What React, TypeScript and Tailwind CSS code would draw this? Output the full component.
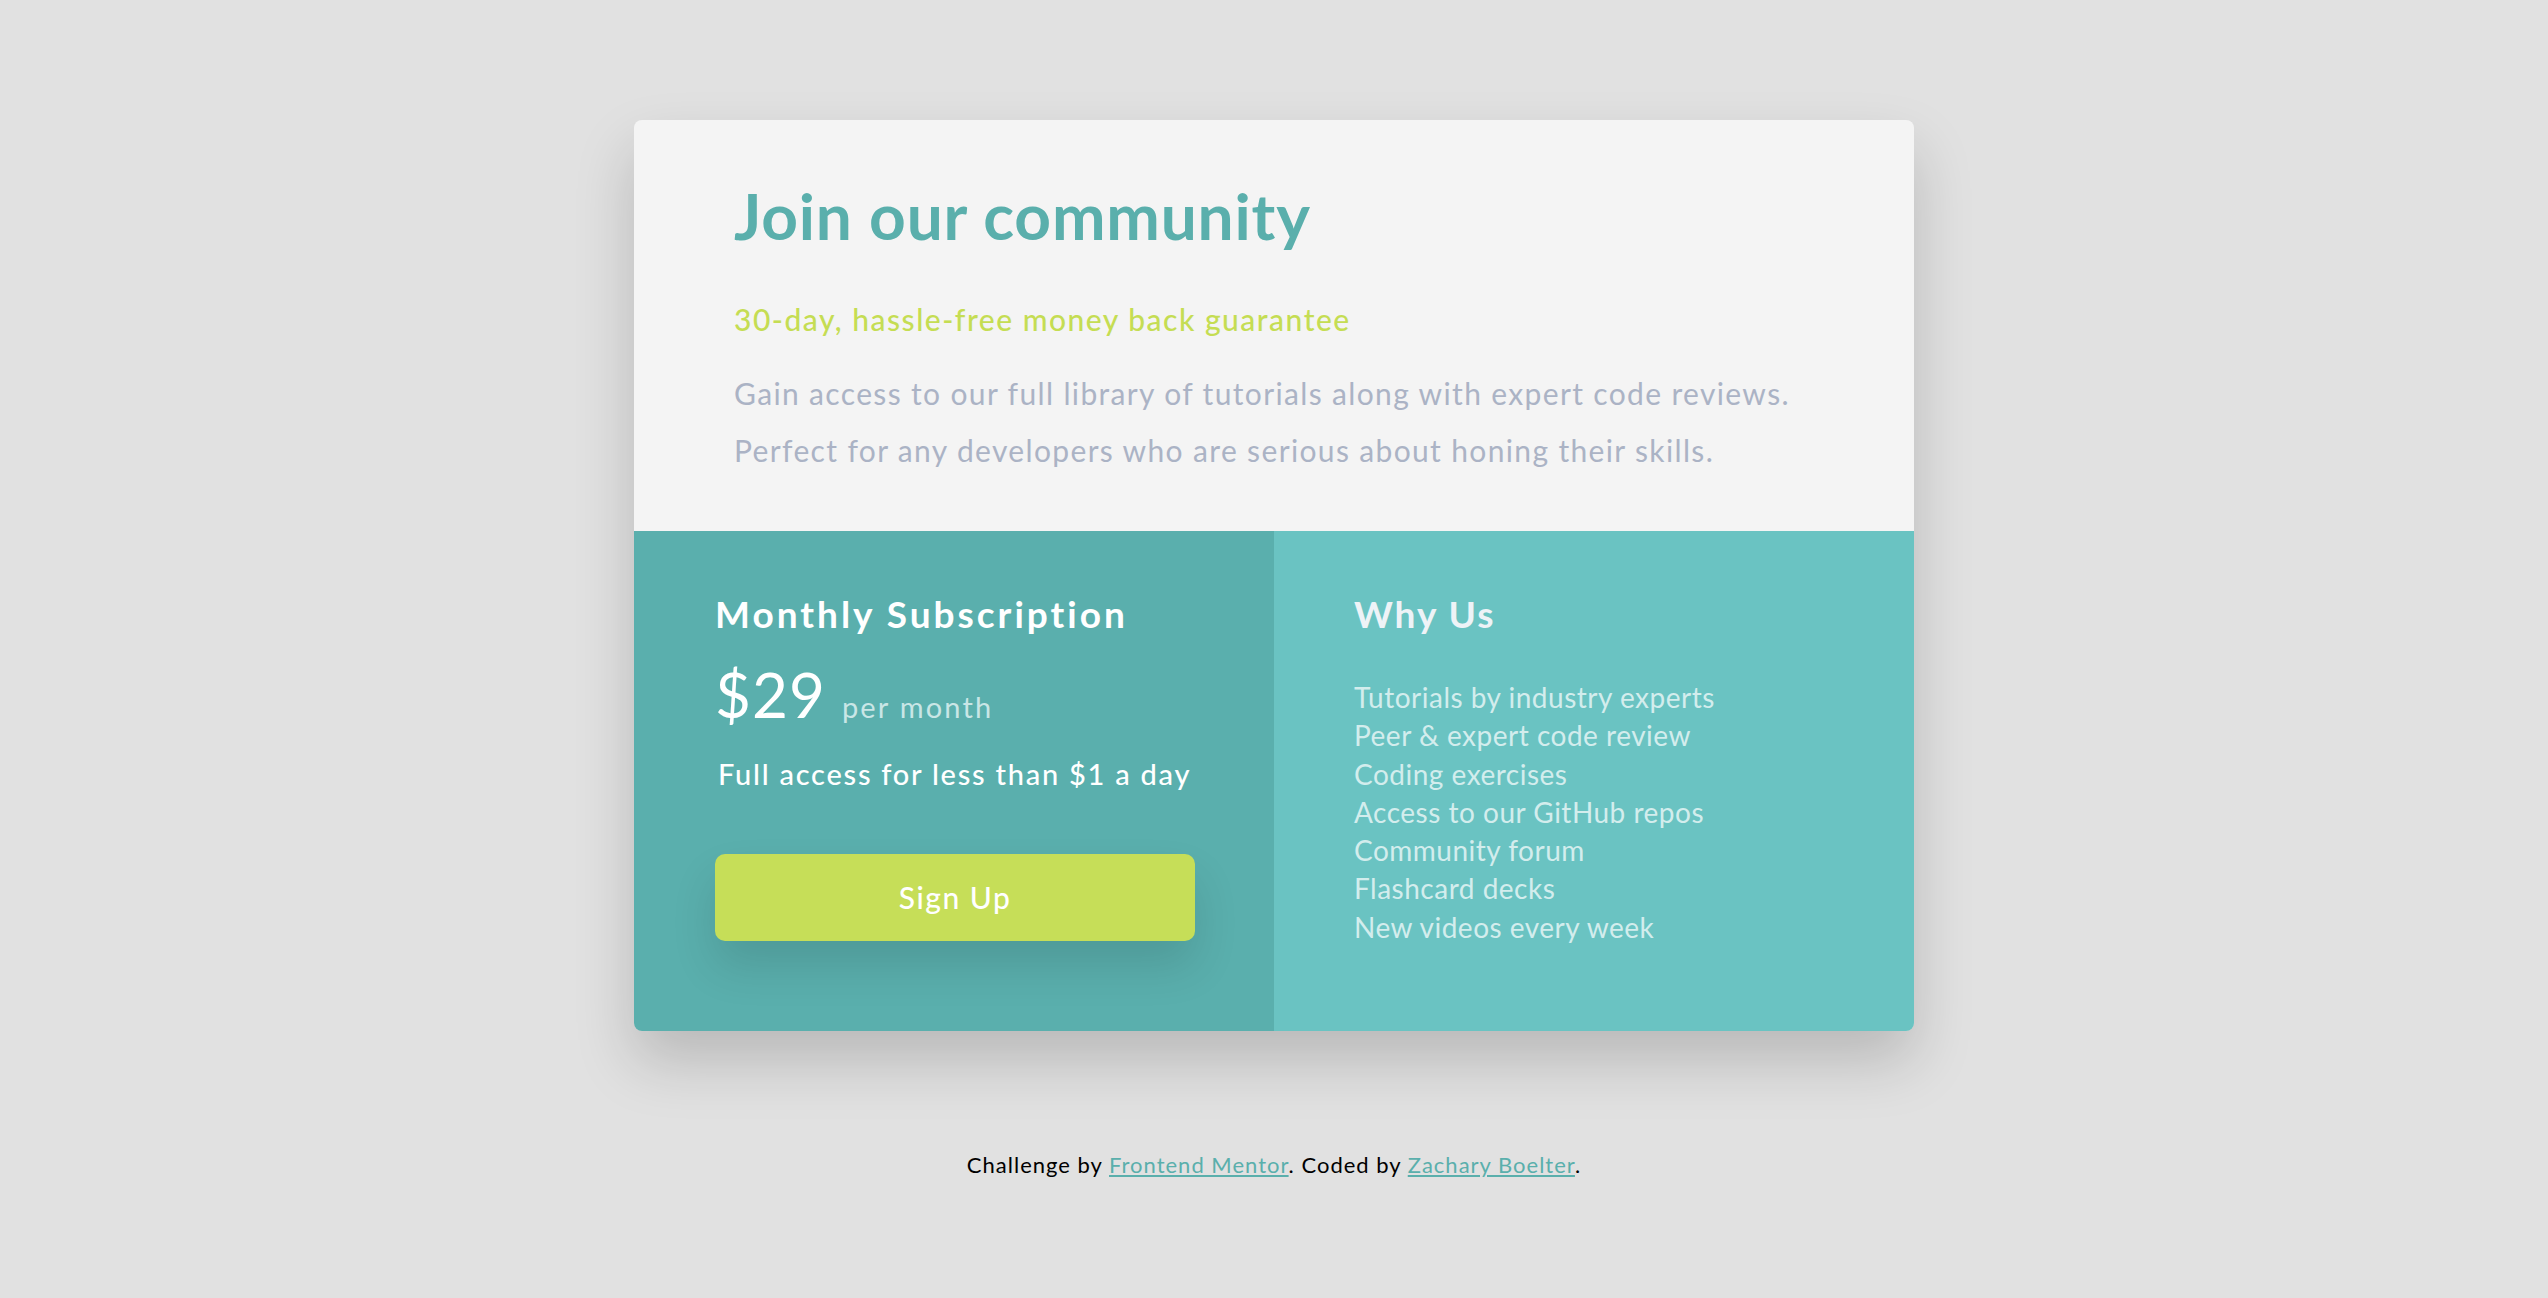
import React from "react";

const features = [
  "Tutorials by industry experts",
  "Peer & expert code review",
  "Coding exercises",
  "Access to our GitHub repos",
  "Community forum",
  "Flashcard decks",
  "New videos every week",
];

export default function App() {
  return (
    <div
      className="min-h-screen bg-[#e1e1e1] pt-[120px] flex flex-col items-center"
      style={{ fontFamily: "Lato, 'Noto Sans', sans-serif" }}
    >
      <div className="w-[1280px] rounded-[8px] overflow-hidden shadow-[0_30px_60px_rgba(0,0,0,0.18)]">
        <div className="bg-[#f4f4f4] pl-[100px] pr-[40px] pt-[64px] pb-[52px]">
          <h1 className="text-[64px] leading-[64px] font-bold text-[#5aafac] tracking-[0.8px]">
            Join our community
          </h1>
          <p className="mt-[56px] text-[30px] leading-[30px] font-medium text-[#c5dd53] tracking-[1.5px]">
            30-day, hassle-free money back guarantee
          </p>
          <p className="mt-[31px] text-[30px] leading-[57px] text-[#abb3c5] tracking-[1.35px] whitespace-nowrap">
            Gain access to our full library of tutorials along with expert code reviews.
            <br />
            Perfect for any developers who are serious about honing their skills.
          </p>
        </div>
        <div className="grid grid-cols-2">
          <div className="bg-[#5aafad] pl-[81px] pr-[60px] pt-[65px] pb-[90px]">
            <h2 className="text-[37px] leading-[36px] font-bold text-white tracking-[3px] whitespace-nowrap">
              Monthly Subscription
            </h2>
            <div className="mt-[31px] flex items-baseline gap-[16px] h-[62px] leading-[62px]">
              <span className="text-[62px] leading-[62px] text-white tracking-[1px]">$29</span>
              <span className="text-[29px] leading-[62px] text-[#c9e6e6] tracking-[2.2px]">per month</span>
            </div>
            <p className="mt-[34px] pl-[3px] text-[29px] leading-[29px] font-medium text-white tracking-[1.75px] whitespace-nowrap">
              Full access for less than $1 a day
            </p>
            <button className="mt-[66px] w-[480px] h-[87px] rounded-[10px] bg-[#c6de58] text-white text-[30px] font-medium tracking-[1.5px] shadow-[0_25px_45px_rgba(0,0,0,0.12)]">
              Sign Up
            </button>
          </div>
          <div className="bg-[#6ac3c2] pl-[80px] pr-[60px] pt-[65px]">
            <h2 className="text-[37px] leading-[36px] font-bold text-[#eef3f7] tracking-[2px]">Why Us</h2>
            <ul className="mt-[46px]">
              {features.map((f) => (
                <li key={f} className="text-[28px] leading-[38.3px] text-[#d3eded] tracking-[0.5px]">
                  {f}
                </li>
              ))}
            </ul>
          </div>
        </div>
      </div>
      <p className="mt-[123px] text-[22px] leading-[22px] text-black tracking-[1px]">
        Challenge by{" "}
        <a href="#" className="text-[#5aafac] underline">
          Frontend Mentor
        </a>
        . Coded by{" "}
        <a href="#" className="text-[#5aafac] underline">
          Zachary Boelter
        </a>
        .
      </p>
    </div>
  );
}
